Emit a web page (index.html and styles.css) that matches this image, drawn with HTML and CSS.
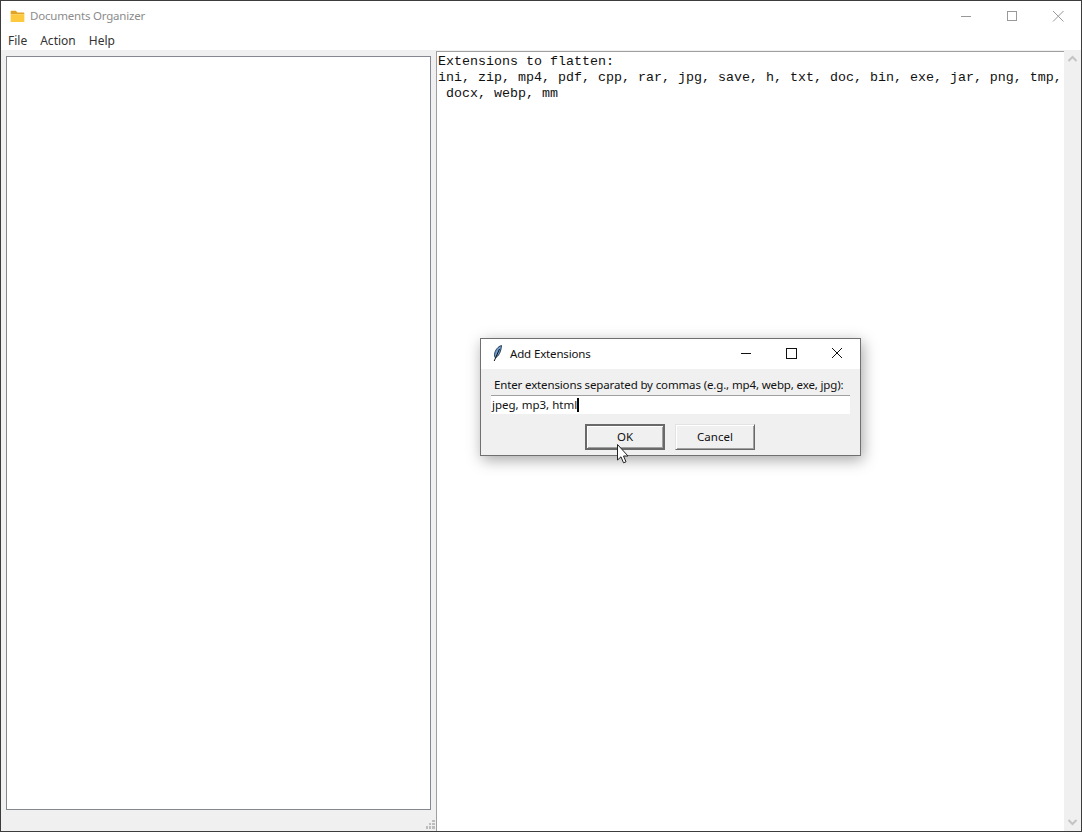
FILE: index.html
```html
<!DOCTYPE html>
<html lang="en">
<head>
<meta charset="UTF-8">
<title>Documents Organizer</title>
<link rel="stylesheet" href="styles.css">
</head>
<body>
<div class="window">
    <!-- Title bar -->
    <div class="titlebar">
        <svg class="app-icon" width="15" height="12" viewBox="0 0 16 14">
            <path d="M0 2 Q0 1 1 1 H6 L8 3 H15 Q16 3 16 4 V5 H0 Z" fill="#e0a526"/>
            <path d="M0 5 H16 V13 Q16 14 15 14 H1 Q0 14 0 13 Z" fill="#fdc93f"/>
        </svg>
        <span class="title">Documents Organizer</span>
        <div class="win-buttons">
            <svg class="win-btn" width="46" height="30" viewBox="0 0 46 30"><path d="M18 15.5 H28" stroke="#999" fill="none"/></svg>
            <svg class="win-btn" width="46" height="30" viewBox="0 0 46 30"><rect x="18.5" y="10.5" width="9" height="9" stroke="#999" fill="none"/></svg>
            <svg class="win-btn" width="46" height="30" viewBox="0 0 46 30"><path d="M18 10 L28.5 20.5 M28.5 10 L18 20.5" stroke="#999" fill="none"/></svg>
        </div>
    </div>

    <!-- Menu -->
    <div class="menubar">
        <span>File</span>
        <span>Action</span>
        <span>Help</span>
    </div>

    <div class="content">
        <div class="left-col">
            <div class="tree"></div>
            <div class="grip">
                <svg width="9" height="9" viewBox="0 0 9 9">
                    <path d="M6 0h3v2H6z M3 3h2v2H3z M6 3h3v2H6z M0 6h2v3H0z M3 6h2v3H3z M6 6h3v3H6z" fill="#bdbdbd"/>
                </svg>
            </div>
        </div>
        <div class="text-area">
            <div class="output">Extensions to flatten:
ini, zip, mp4, pdf, cpp, rar, jpg, save, h, txt, doc, bin, exe, jar, png, tmp,
 docx, webp, mm</div>
            <div class="scrollbar">
                <svg width="17" height="17" viewBox="0 0 17 17"><path d="M4.500 10 L8.500 6 L12.500 10" stroke="#c4c4c4" stroke-width="2" fill="none"/></svg>
                <svg width="17" height="17" viewBox="0 0 17 17"><path d="M4.500 6 L8.500 10 L12.500 6" stroke="#c4c4c4" stroke-width="2" fill="none"/></svg>
            </div>
        </div>
    </div>
</div>

<!-- Dialog -->
<div class="dialog">
    <div class="dialog-title">
        <svg class="feather" width="12" height="17" viewBox="0 0 12 17">
            <path d="M9.500 0.500 C6 1.500 3 5 2.500 9.500 C2.400 11 2.800 12.200 3.300 12.800 C6.500 11.500 9 7 9.500 0.500 Z" fill="#6f9fd0" stroke="#1c3048" stroke-width="0.9"/>
            <path d="M7.500 4 L2.200 16" stroke="#111" stroke-width="1" fill="none"/>
        </svg>
        <span class="dialog-name">Add Extensions</span>
        <div class="win-buttons">
            <svg class="win-btn" width="46" height="30" viewBox="0 0 46 30"><path d="M19 14.500 H29" stroke="#111" fill="none"/></svg>
            <svg class="win-btn" width="46" height="30" viewBox="0 0 46 30"><rect x="18.500" y="9.500" width="10" height="10" stroke="#111" fill="none"/></svg>
            <svg class="win-btn" width="46" height="30" viewBox="0 0 46 30"><path d="M18 9 L28 19 M28 9 L18 19" stroke="#111" fill="none"/></svg>
        </div>
    </div>
    <div class="dialog-body">
        <div class="prompt">Enter extensions separated by commas (e.g., mp4, webp, exe, jpg):</div>
        <div class="entry"><span>jpeg, mp3, html</span><i class="caret"></i></div>
        <div class="dialog-buttons">
            <div class="btn btn-default">OK</div>
            <div class="btn">Cancel</div>
        </div>
    </div>
</div>

<svg class="cursor" width="13" height="20" viewBox="0 0 13 20">
    <path d="M0.500 0.500 V16 L4 12.800 L6.500 18.800 L9 17.800 L6.500 12 H11 Z" fill="#fff" stroke="#222"/>
</svg>
</body>
</html>
```

FILE: styles.css
```css
* {
    box-sizing: border-box;
}

body {
    margin: 0;
    width: 1082px;
    height: 832px;
    overflow: hidden;
    font-family: "Noto Sans", sans-serif;
    font-size: 11.5px;
    color: #111;
    position: relative;
    background: #fff;
}

.window {
    width: 1082px;
    height: 832px;
    border: 1px solid #3c3c3c;
    display: flex;
    flex-direction: column;
}

.titlebar {
    height: 29px;
    background: #fff;
    display: flex;
    align-items: center;
    padding-left: 9px;
    flex-shrink: 0;
}

.app-icon {
    margin-right: 5px;
}

.title {
    color: #8c8c8c;
    letter-spacing: -0.2px;
}

.win-buttons {
    margin-left: auto;
    display: flex;
}

.win-btn {
    display: block;
}

.menubar {
    height: 20px;
    background: #fff;
    display: flex;
    align-items: center;
    gap: 13px;
    padding: 1px 0 0 7px;
    flex-shrink: 0;
    color: #333;
    font-size: 12px;
}

.content {
    flex: 1;
    background: #f0f0f0;
    display: flex;
    min-height: 0;
}

.left-col {
    width: 435px;
    padding: 6px 0 0 5px;
    display: flex;
    flex-direction: column;
}

.tree {
    width: 425px;
    height: 754px;
    background: #fff;
    border: 1px solid #858890;
}

.grip {
    flex: 1;
    display: flex;
    justify-content: flex-end;
    align-items: flex-end;
    padding: 0 1px 2px 0;
}

.text-area {
    flex: 1;
    display: flex;
    margin-top: 1px;
    border-left: 1px solid #a0a0a0;
    min-width: 0;
}

.output {
    flex: 1;
    background: #fff;
    border-top: 1px solid #a0a0a0;
    padding: 2px 0 0 1px;
    font-family: "Liberation Mono", monospace;
    font-size: 13.33px;
    line-height: 16px;
    white-space: pre;
    color: #111;
    overflow: hidden;
}

.scrollbar {
    width: 17px;
    flex-shrink: 0;
    display: flex;
    flex-direction: column;
    justify-content: space-between;
    background: #f0f0f0;
}

/* dialog sits above the main window */
.dialog {
    position: absolute;
    left: 480px;
    top: 338px;
    width: 381px;
    height: 118px;
    border: 1px solid #707070;
    background: #f0f0f0;
    box-shadow: 2px 4px 14px rgba(0, 0, 0, 0.35);
    display: flex;
    flex-direction: column;
}

.dialog-title {
    height: 30px;
    background: #fff;
    display: flex;
    align-items: center;
    padding: 0 0 1px 11px;
    flex-shrink: 0;
}

.dialog-name {
    letter-spacing: -0.15px;
}

.feather {
    margin-right: 6px;
}

.dialog-title .win-btn {
    margin-top: 1px;
}

.dialog-body {
    flex: 1;
    padding: 8px 10px 0 10px;
}

.prompt {
    padding-left: 3px;
    line-height: 16px;
    height: 18px;
    white-space: nowrap;
    letter-spacing: -0.14px;
}

.entry {
    width: 359px;
    height: 19px;
    background: #fff;
    border-top: 1px solid #a0a0a0;
    padding: 0 0 2px 1px;
    display: flex;
    align-items: center;
}

.caret {
    width: 2px;
    height: 14px;
    margin-top: 2px;
    background: #000;
}

.dialog-buttons {
    display: flex;
    gap: 10px;
    margin-top: 10px;
    padding-left: 94px;
}

.btn {
    width: 80px;
    height: 26px;
    background: #f0f0f0;
    border: 1px solid #e3e3e3;
    border-right-color: #696969;
    border-bottom-color: #696969;
    box-shadow: 1px 1px 0 #fff inset, -1px -1px 0 #a0a0a0 inset;
    display: flex;
    align-items: center;
    justify-content: center;
    padding-bottom: 2px;
}

.btn-default {
    border: 2px solid #696969;
}

.cursor {
    position: absolute;
    left: 617px;
    top: 444px;
}
```
